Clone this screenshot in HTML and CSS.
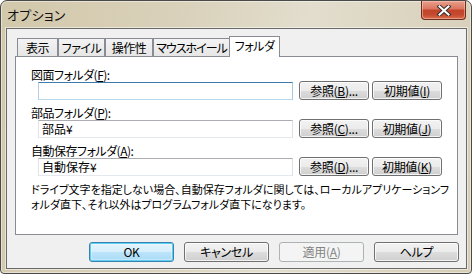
FILE: index.html
```html
<!DOCTYPE html>
<html lang="ja">
<head>
<meta charset="utf-8">
<title>オプション</title>
<link rel="stylesheet" href="styles.css">
</head>
<body>
<div class="window">
  <div class="titlebar">
    <span class="title">オプション</span>
    <div class="close">
      <svg width="14" height="11" viewBox="0 0 14 11">
        <path d="M2.5 1.5 L11.5 9.5 M11.5 1.5 L2.5 9.5" stroke="#3a3030" stroke-width="4" stroke-linecap="square" fill="none"/>
        <path d="M2.5 1.5 L11.5 9.5 M11.5 1.5 L2.5 9.5" stroke="#ffffff" stroke-width="2" stroke-linecap="square" fill="none"/>
      </svg>
    </div>
  </div>
  <div class="client">
    <div class="tabs">
      <div class="tab t1">表示</div>
      <div class="tab t2">ファイル</div>
      <div class="tab t3">操作性</div>
      <div class="tab t4">マウスホイール</div>
      <div class="tab t5 active">フォルダ</div>
    </div>
    <div class="panel">
      <div class="field">
        <div class="label">図面フォルダ(<u>F</u>):</div>
        <div class="row">
          <div class="input focus"></div>
          <div class="btn small">参照(<u>B</u>)...</div>
          <div class="btn small wide">初期値(<u>I</u>)</div>
        </div>
      </div>
      <div class="field">
        <div class="label">部品フォルダ(<u>P</u>):</div>
        <div class="row">
          <div class="input">部品¥</div>
          <div class="btn small">参照(<u>C</u>)...</div>
          <div class="btn small wide">初期値(<u>J</u>)</div>
        </div>
      </div>
      <div class="field">
        <div class="label">自動保存フォルダ(<u>A</u>):</div>
        <div class="row">
          <div class="input">自動保存¥</div>
          <div class="btn small">参照(<u>D</u>)...</div>
          <div class="btn small wide">初期値(<u>K</u>)</div>
        </div>
      </div>
      <p class="note">ドライブ文字を指定しない場合、自動保存フォルダに関しては、ローカルアプリケーションフ<br>ォルダ直下、それ以外はプログラムフォルダ直下になります。</p>
    </div>
    <div class="buttons">
      <div class="btn big default">OK</div>
      <div class="btn big">キャンセル</div>
      <div class="btn big disabled">適用(<u>A</u>)</div>
      <div class="btn big">ヘルプ</div>
    </div>
  </div>
</div>
</body>
</html>
```

FILE: styles.css
```css
* { box-sizing: border-box; }

html, body {
  margin: 0;
  padding: 0;
  background: #ffffff;
}

body {
  width: 474px;
  height: 276px;
  font-family: "Noto Sans CJK JP", "Noto Sans", sans-serif;
  font-size: 12px;
  color: #000;
}

.window {
  width: 472px;
  height: 274px;
  border: 1px solid #4a4a48;
  border-radius: 7px 7px 4px 4px;
  background: linear-gradient(100deg, #d2c8ab 0%, #d9d1ba 35%, #e2ddcd 60%, #dcd5c1 80%, #d5cdb5 100%);
  box-shadow: inset 0 0 0 1px rgba(255, 255, 255, 0.45);
  display: flex;
  flex-direction: column;
  overflow: hidden;
}

.titlebar {
  height: 27px;
  display: flex;
  justify-content: space-between;
  align-items: flex-start;
  flex: none;
}

.title {
  padding: 5px 0 0 6px;
  font-size: 13px;
  line-height: 18px;
  color: #101010;
  font-feature-settings: "palt";
  letter-spacing: 0.3px;
}

.close {
  width: 45px;
  height: 19px;
  margin-right: 5px;
  border: 1px solid #6b2c22;
  border-top: none;
  border-radius: 0 0 4px 4px;
  background: linear-gradient(#e9a08c 0%, #d8745d 45%, #c1432a 50%, #c44a2f 75%, #d86a4c 100%);
  box-shadow: inset 0 0 0 1px rgba(255, 210, 190, 0.5);
  display: flex;
  align-items: center;
  justify-content: center;
}

.client {
  flex: 1;
  margin: 0 4px 4px 5px;
  border: 1px solid #6a6a6a;
  background: #f0f0f0;
  box-shadow: 0 0 0 1px rgba(255, 255, 255, 0.5);
  padding: 0 8px 6px 8px;
  display: flex;
  flex-direction: column;
}

.tabs {
  margin-top: 7px;
  height: 21px;
  margin-bottom: -1px;
  padding-left: 2px;
  display: flex;
  align-items: flex-end;
  position: relative;
  z-index: 1;
}

.tab {
  height: 19px;
  border: 1px solid #898c95;
  background: linear-gradient(#f3f3f3, #e6e6e6);
  text-align: center;
  line-height: 17px;
  font-feature-settings: "palt";
  letter-spacing: -0.5px;
  white-space: nowrap;
  overflow: visible;
}

.t1 { width: 41px; }
.t2 { width: 47px; }
.t3 { width: 48px; }
.t4 { width: 77px; letter-spacing: -1px; }
.t5 { width: 51px; margin-left: -1px; }

.tab.active {
  height: 21px;
  background: #ffffff;
  border-bottom: none;
  line-height: 18px;
}

.panel {
  height: 179px;
  border: 1px solid #898c95;
  background: #ffffff;
  padding: 11px 0 0 15px;
}

.field {
  margin-bottom: 6px;
}

.label {
  height: 13px;
  line-height: 13px;
  font-feature-settings: "palt";
  letter-spacing: -0.5px;
  white-space: nowrap;
}

u {
  text-underline-offset: 1px;
}

.row {
  height: 19px;
  margin-left: 7px;
  display: flex;
  align-items: center;
}

.input {
  width: 255px;
  height: 18px;
  border: 1px solid;
  border-color: #abadb3 #dbdfe6 #e3e9ef #e2e3ea;
  background: #fff;
  padding-left: 3px;
  line-height: 16px;
  font-feature-settings: "palt";
  margin-right: 6px;
}

.input.focus {
  border-color: #3d7bad #a4c9e3 #b7d9ed #b5cfe7;
}

.btn {
  border: 1px solid #707070;
  border-radius: 3px;
  background: linear-gradient(#f2f2f2 0%, #ebebeb 50%, #dddddd 51%, #cfcfcf 100%);
  box-shadow: inset 0 0 0 1px rgba(255, 255, 255, 0.75);
  display: flex;
  align-items: center;
  justify-content: center;
  white-space: nowrap;
  font-feature-settings: "palt";
  letter-spacing: -0.3px;
}

.btn.small {
  width: 70px;
  height: 19px;
  line-height: 15px;
}

.btn.small.wide {
  margin-left: 3px;
}

.buttons {
  margin-top: 7px;
  display: flex;
  justify-content: flex-end;
  gap: 10px;
  margin-right: -1px;
}

.btn.big {
  width: 85px;
  height: 20px;
  line-height: 16px;
}

.btn.default {
  border-color: #3c7fb1;
  background: linear-gradient(#e5f4fc 0%, #d6eefb 50%, #bce4fa 51%, #a9dbf6 100%);
  box-shadow: inset 0 0 0 1px #5bd0f0, inset 0 0 0 2px rgba(255, 255, 255, 0.3);
}

.btn.disabled {
  border-color: #adb2b5;
  background: #f4f4f4;
  box-shadow: none;
  color: #838383;
}

.note {
  margin: 2px 0 0 0;
  font-size: 11px;
  line-height: 15px;
  white-space: nowrap;
  font-feature-settings: "palt";
}
```
